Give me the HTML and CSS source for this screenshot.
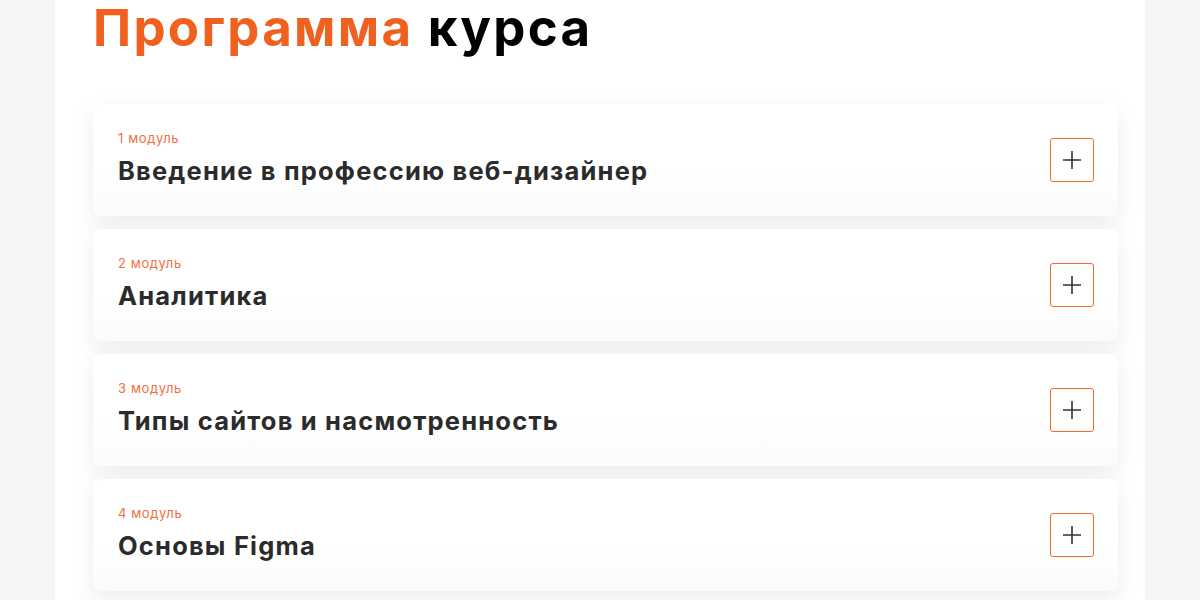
FILE: index.html
```html
<!DOCTYPE html>
<html lang="ru">
<head>
    <meta charset="UTF-8">
    <meta name="viewport" content="width=device-width, initial-scale=1.0">
    <title>Программа курса</title>
    <link rel="stylesheet" href="styles.css">
</head>
<body>

    <div class="page">
        <h2 class="title"><span class="accent">Программа</span> курса</h2>

        <div class="modules">
            <div class="module">
                <div class="module-text">
                    <div class="module-num">1 модуль</div>
                    <div class="module-name">Введение в профессию веб-дизайнер</div>
                </div>
                <button class="toggle" aria-label="Открыть">
                    <svg width="20" height="20" viewBox="0 0 20 20"><path d="M10 1v18M1 10h18" stroke="#333" stroke-width="1.6" fill="none"/></svg>
                </button>
            </div>

            <div class="module">
                <div class="module-text">
                    <div class="module-num">2 модуль</div>
                    <div class="module-name">Аналитика</div>
                </div>
                <button class="toggle" aria-label="Открыть">
                    <svg width="20" height="20" viewBox="0 0 20 20"><path d="M10 1v18M1 10h18" stroke="#333" stroke-width="1.6" fill="none"/></svg>
                </button>
            </div>

            <div class="module">
                <div class="module-text">
                    <div class="module-num">3 модуль</div>
                    <div class="module-name">Типы сайтов и насмотренность</div>
                </div>
                <button class="toggle" aria-label="Открыть">
                    <svg width="20" height="20" viewBox="0 0 20 20"><path d="M10 1v18M1 10h18" stroke="#333" stroke-width="1.6" fill="none"/></svg>
                </button>
            </div>

            <div class="module">
                <div class="module-text">
                    <div class="module-num">4 модуль</div>
                    <div class="module-name">Основы Figma</div>
                </div>
                <button class="toggle" aria-label="Открыть">
                    <svg width="20" height="20" viewBox="0 0 20 20"><path d="M10 1v18M1 10h18" stroke="#333" stroke-width="1.6" fill="none"/></svg>
                </button>
            </div>
        </div>
    </div>

</body>
</html>
```

FILE: styles.css
```css
body {
    margin: 0;
    background: #f5f5f5;
    font-family: Inter, "Noto Sans", sans-serif;
}
.page {
    width: 1090px;
    margin: 0 auto;
    background: white;
    padding: 0 27px 40px 38px;
    box-sizing: border-box;
    min-height: 600px;
}
.title {
    margin: 0;
    font-size: 51px;
    line-height: 56px;
    font-weight: 700;
    color: #000;
    letter-spacing: 2.3px;
}
.accent {
    color: #f0601e;
}
.modules {
    margin-top: 48px;
    display: flex;
    flex-direction: column;
    gap: 13px;
}
.module {
    background: linear-gradient(to bottom, #ffffff 60%, #fbfbfb 100%);
    border-radius: 8px;
    height: 112px;
    padding: 0 24px 0 25px;
    box-sizing: border-box;
    display: flex;
    align-items: center;
    justify-content: space-between;
    box-shadow: 0px 8px 24px rgba(0, 0, 0, 0.08);
}
.module-text {
    padding-bottom: 4px;
}
.module-num {
    color: #f07040;
    font-size: 13px;
    letter-spacing: 0.6px;
    margin-bottom: 9px;
}
.module-name {
    color: #2b2b2b;
    font-size: 25.5px;
    font-weight: 700;
    letter-spacing: 1.2px;
}
.toggle {
    width: 44px;
    height: 44px;
    border: 1px solid #f06a2c;
    border-radius: 3px;
    background: white;
    display: flex;
    align-items: center;
    justify-content: center;
    padding: 0;
    cursor: pointer;
}
```
